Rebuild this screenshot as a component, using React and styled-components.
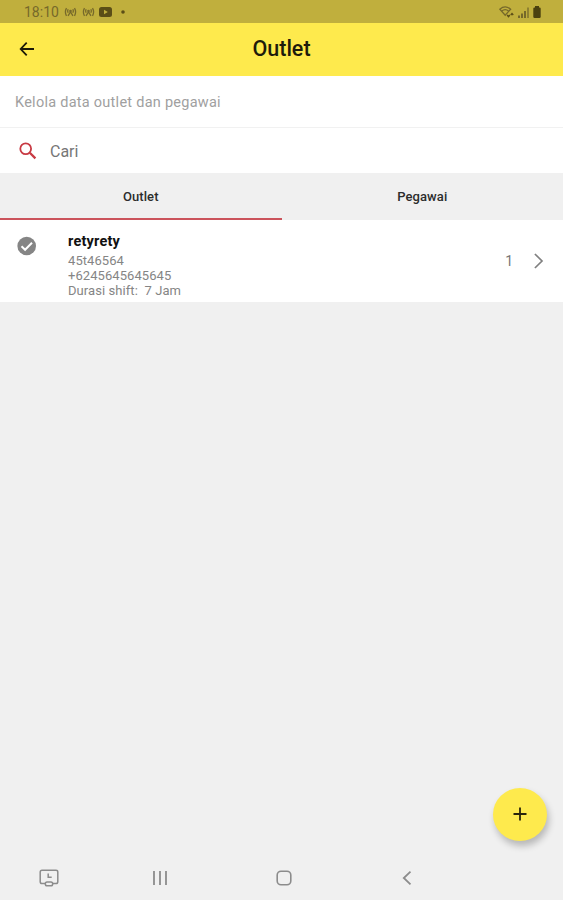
import styled, { createGlobalStyle } from "styled-components";

const GlobalStyle = createGlobalStyle`
  * {
    box-sizing: border-box;
  }

  body {
    margin: 0;
    background-color: #f0f0f0;
    font-family: Roboto, "Liberation Sans", sans-serif;
  }

  svg {
    display: block;
    flex-shrink: 0;
  }
`;

const Screen = styled.div`
  position: relative;
  display: flex;
  flex-direction: column;
  width: 563px;
  height: 900px;
  overflow: hidden;
  background-color: #f0f0f0;
`;

const StatusBar = styled.div`
  display: flex;
  align-items: center;
  justify-content: space-between;
  height: 23px;
  padding: 1px 22px 0 24px;
  background-color: #c0af3d;
  color: #76692a;
`;

const StatusGroup = styled.div`
  display: flex;
  align-items: center;
  gap: ${(props) => props.$gap}px;
`;

const Clock = styled.span`
  width: 36px;
  font-size: 14px;
  line-height: 20px;
  white-space: nowrap;
`;

const Header = styled.header`
  display: grid;
  grid-template-columns: 54px 1fr 54px;
  align-items: center;
  height: 53px;
  padding-bottom: 1px;
  background-color: #feea4d;
`;

const BackButton = styled.button`
  display: flex;
  justify-content: center;
  padding: 0;
  border: none;
  background: none;
  color: #1c1a08;
`;

const Title = styled.h1`
  margin: 0;
  color: #1f1c0b;
  font-size: 21.5px;
  font-weight: 500;
  line-height: 26px;
  text-align: center;
`;

const Description = styled.p`
  height: 52px;
  margin: 0;
  padding: 1px 15px 0;
  border-bottom: 1px solid #f1f1f1;
  background-color: white;
  color: #a0a0a0;
  font-size: 14.5px;
  line-height: 52px;
  letter-spacing: 0.26px;
`;

const SearchBar = styled.label`
  display: flex;
  align-items: center;
  gap: 13px;
  height: 45px;
  padding: 1px 19px 0;
  background-color: white;
`;

const SearchInput = styled.input`
  flex: 1;
  padding: 0;
  border: none;
  outline: none;
  background: none;
  font-family: inherit;
  font-size: 16px;

  &::placeholder {
    color: #767676;
  }
`;

const Tabs = styled.div`
  display: grid;
  grid-template-columns: 1fr 1fr;
  height: 47px;
`;

const Tab = styled.button`
  padding: 2px 0 0;
  border: none;
  border-bottom: 2px solid ${(props) => (props.$active ? "#cb535b" : "transparent")};
  background: none;
  color: #2c2c2c;
  font-family: inherit;
  font-size: 13px;
  font-weight: 500;
  letter-spacing: 0.1px;
`;

const OutletRow = styled.div`
  display: flex;
  height: 82px;
  padding: 0 18px 0 17px;
  background-color: white;
`;

const CheckMark = styled.div`
  width: 51px;
  padding-top: 16px;
`;

const OutletInfo = styled.div`
  flex: 1;
  padding-top: 14px;
`;

const OutletName = styled.h2`
  margin: 0 0 3px;
  color: #111;
  font-size: 14.5px;
  font-weight: 700;
  line-height: 16px;
  letter-spacing: 0.2px;
`;

const OutletDetail = styled.p`
  margin: 0;
  color: #858585;
  font-size: 13px;
  line-height: 15px;
  letter-spacing: 0.07px;
  white-space: pre;
`;

const OutletCount = styled.div`
  display: flex;
  align-items: center;
  gap: 20px;
  color: #777;
  font-size: 14px;
`;

const AddButton = styled.button`
  position: absolute;
  right: 16px;
  bottom: 59px;
  display: flex;
  align-items: center;
  justify-content: center;
  width: 54px;
  height: 53px;
  padding: 0 0 1px;
  border: none;
  border-radius: 50%;
  background-color: #feea4d;
  color: #29250c;
  box-shadow: 2px 5px 7px rgba(0, 0, 0, 0.24);
`;

const NavBar = styled.nav`
  display: grid;
  grid-template-columns: 98px 124px 123px 123px;
  align-items: center;
  justify-items: center;
  height: 44px;
  margin-top: auto;
  color: #8c8c8c;
`;

const outlets = [
  {
    name: "retyrety",
    address: "45t46564",
    phone: "+6245645645645",
    shift: "Durasi shift:  7 Jam",
    count: 1,
  },
];

function BroadcastIcon() {
  return (
    <svg width="13" height="10" viewBox="0 0 13 10" fill="none" stroke="currentColor" strokeWidth="1.3">
      <path d="M2.5 1.2Q0.3 5 2.5 8.8M10.5 1.2Q12.7 5 10.5 8.8M4 8.8L6.5 5L9 8.8M4.2 2.2Q3.2 4 4.2 5.8M8.8 2.2Q9.8 4 8.8 5.8" />
      <circle cx="6.5" cy="4" r="1.3" fill="currentColor" stroke="none" />
    </svg>
  );
}

function VideoIcon() {
  return (
    <svg width="13" height="10" viewBox="0 0 13 10">
      <rect width="13" height="10" rx="2.5" fill="#5b4e17" />
      <path d="M5 2.8L8.8 5L5 7.2Z" fill="#c0af3d" />
    </svg>
  );
}

function DotIcon() {
  return (
    <svg width="4" height="4" viewBox="0 0 4 4">
      <circle cx="2" cy="2" r="1.8" fill="#5b4e17" />
    </svg>
  );
}

function WifiIcon() {
  return (
    <svg width="15" height="12" viewBox="0 0 15 12" fill="none" stroke="#75682a">
      <path d="M0.8 3.2Q6.2 -1.4 11.6 3.2L6.2 9.2Z" strokeWidth="1.3" />
      <path d="M2.8 5Q6.2 2.3 9.6 5" strokeWidth="1.3" />
      <path d="M8.2 9L9.5 10.6L10.8 9M11.8 9L13 7.6L14.2 9" stroke="#5b4e17" strokeWidth="1.5" />
    </svg>
  );
}

function SignalIcon() {
  return (
    <svg width="11" height="11" viewBox="0 0 11 11" fill="#75682a">
      <rect x="0" y="8.5" width="2" height="2.5" />
      <rect x="3" y="6.5" width="2" height="4.5" />
      <rect x="6" y="4" width="2" height="7" />
      <rect x="9" y="0.5" width="2" height="10.5" opacity="0.65" />
    </svg>
  );
}

function BatteryIcon() {
  return (
    <svg width="8" height="12" viewBox="0 0 8 12" fill="#4b410f">
      <rect x="2" width="4" height="3" />
      <rect x="0.3" y="1.5" width="7.4" height="10.5" rx="1.2" />
    </svg>
  );
}

function ArrowIcon() {
  return (
    <svg width="16" height="16" viewBox="0 0 16 16" fill="none" stroke="currentColor" strokeWidth="1.8">
      <path d="M15 8H2M7.7 1.7L1.7 8L7.7 14.3" />
    </svg>
  );
}

function SearchIcon() {
  return (
    <svg width="18" height="18" viewBox="0 0 18 18" fill="none" stroke="#c83a43">
      <circle cx="6.7" cy="6.7" r="5.4" strokeWidth="1.8" />
      <path d="M10.8 10.8L16.4 16.4" strokeWidth="2.3" />
    </svg>
  );
}

function CheckIcon() {
  return (
    <svg width="19" height="20" viewBox="0 0 19 20">
      <circle cx="9.7" cy="10" r="9.3" fill="#858585" />
      <path d="M4.5 10.3L8.1 13.8L15 6.8" fill="none" stroke="white" strokeWidth="2" />
    </svg>
  );
}

function ChevronIcon() {
  return (
    <svg width="12" height="16" viewBox="0 0 12 16" fill="none" stroke="#808080" strokeWidth="1.7">
      <path d="M1.9 1L9 8L1.9 15" />
    </svg>
  );
}

function PlusIcon() {
  return (
    <svg width="14" height="14" viewBox="0 0 14 14" fill="none" stroke="currentColor" strokeWidth="1.8">
      <path d="M7 0.5V13.5M0.5 7H13.5" />
    </svg>
  );
}

function CaptureIcon() {
  return (
    <svg width="20" height="18" viewBox="0 0 20 18" fill="none" stroke="currentColor" strokeWidth="1.5">
      <path d="M6 14.6H3Q1.2 14.6 1.2 12.8V3Q1.2 1.3 3 1.3H17Q18.8 1.3 18.8 3V12.8Q18.8 14.6 17 14.6H14" />
      <rect x="6.3" y="13" width="7.4" height="3.7" rx="1.8" />
      <path d="M9.2 4.5V8.3H12.7" />
    </svg>
  );
}

function RecentsIcon() {
  return (
    <svg width="16" height="14" viewBox="0 0 16 14" fill="none" stroke="currentColor" strokeWidth="1.8">
      <path d="M2 0V14M8 0V14M14 0V14" />
    </svg>
  );
}

function HomeIcon() {
  return (
    <svg width="16" height="16" viewBox="0 0 16 16" fill="none" stroke="currentColor" strokeWidth="1.6">
      <rect x="1.2" y="1.2" width="13.6" height="13.6" rx="3.8" />
    </svg>
  );
}

function NavBackIcon() {
  return (
    <svg width="10" height="14" viewBox="0 0 10 14" fill="none" stroke="currentColor" strokeWidth="1.8">
      <path d="M8.5 0.7L1.8 7L8.5 13.3" />
    </svg>
  );
}

export default function App() {
  return (
    <>
      <GlobalStyle />
      <Screen>
        <StatusBar>
          <StatusGroup $gap={4}>
            <Clock>18:10</Clock>
            <StatusGroup $gap={5}>
              <BroadcastIcon />
              <BroadcastIcon />
            </StatusGroup>
            <StatusGroup $gap={9}>
              <VideoIcon />
              <DotIcon />
            </StatusGroup>
          </StatusGroup>
          <StatusGroup $gap={4}>
            <WifiIcon />
            <SignalIcon />
            <BatteryIcon />
          </StatusGroup>
        </StatusBar>

        <Header>
          <BackButton aria-label="Kembali">
            <ArrowIcon />
          </BackButton>
          <Title>Outlet</Title>
        </Header>

        <Description>Kelola data outlet dan pegawai</Description>

        <SearchBar>
          <SearchIcon />
          <SearchInput type="text" placeholder="Cari" />
        </SearchBar>

        <Tabs>
          <Tab $active>Outlet</Tab>
          <Tab>Pegawai</Tab>
        </Tabs>

        {outlets.map((outlet) => (
          <OutletRow key={outlet.name}>
            <CheckMark>
              <CheckIcon />
            </CheckMark>
            <OutletInfo>
              <OutletName>{outlet.name}</OutletName>
              <OutletDetail>{outlet.address}</OutletDetail>
              <OutletDetail>{outlet.phone}</OutletDetail>
              <OutletDetail>{outlet.shift}</OutletDetail>
            </OutletInfo>
            <OutletCount>
              {outlet.count}
              <ChevronIcon />
            </OutletCount>
          </OutletRow>
        ))}

        <AddButton aria-label="Tambah">
          <PlusIcon />
        </AddButton>

        <NavBar>
          <CaptureIcon />
          <RecentsIcon />
          <HomeIcon />
          <NavBackIcon />
        </NavBar>
      </Screen>
    </>
  );
}
